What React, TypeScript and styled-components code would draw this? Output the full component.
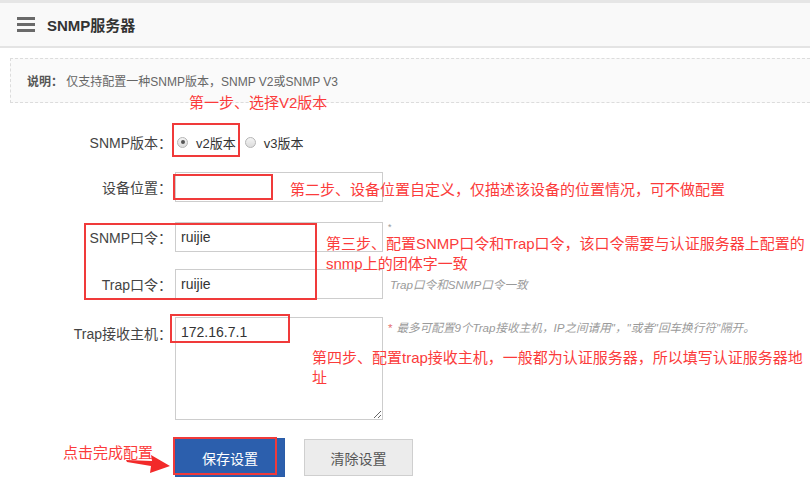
import React from 'react'
import styled, { createGlobalStyle } from 'styled-components'

const GlobalStyle = createGlobalStyle`
  html, body {
    margin: 0;
    padding: 0;
    background: #fff;
  }
  body {
    font-family: "Liberation Sans", "Noto Sans CJK SC", sans-serif;
    color: #333;
  }
`

const Page = styled.div`
  position: relative;
  width: 810px;
  height: 494px;
  overflow: hidden;
  background: #fff;
`

const TopStrip = styled.div`
  height: 3px;
  background: #e6e6e6;
`

const Header = styled.div`
  display: flex;
  align-items: center;
  height: 43px;
  padding-left: 17px;
  background: #f9f9f9;
  border-bottom: 2px solid #e4e4e4;
`

const Burger = styled.span`
  display: flex;
  flex-direction: column;
  justify-content: space-between;
  width: 18px;
  height: 15px;
  margin-right: 12px;

  i {
    display: block;
    height: 3px;
    background: #6a6a6a;
  }
`

const Title = styled.h1`
  margin: 0;
  font-size: 15px;
  font-weight: bold;
  color: #333;
`

const Note = styled.div`
  display: flex;
  align-items: center;
  height: 43px;
  margin: 10px 0 0 10px;
  padding-left: 16px;
  background: #fafafa;
  border: 1px dashed #dcdcdc;
  border-right: none;
  font-size: 12px;
  color: #666;

  b {
    color: #555;
  }
`

const Form = styled.div`
  display: flex;
  flex-direction: column;
  padding-top: 24px;
`

const Row = styled.div<{ $top?: number; $align?: string }>`
  display: flex;
  align-items: ${p => p.$align || 'center'};
  margin-top: ${p => p.$top || 0}px;
`

const Label = styled.label<{ $pad?: number }>`
  width: 172px;
  margin-right: 3px;
  padding-top: ${p => p.$pad || 0}px;
  text-align: right;
  font-size: 14px;
  color: #444;
  flex-shrink: 0;
`

const RadioGroup = styled.div`
  display: flex;
  align-items: center;
  height: 30px;
  padding-left: 2px;
`

const Radio = styled.span<{ $checked?: boolean }>`
  position: relative;
  width: 9px;
  height: 9px;
  border: 1px solid #b5b5b5;
  border-radius: 50%;
  background: linear-gradient(#f4f4f4, #dcdcdc);

  &::after {
    content: '';
    display: ${p => (p.$checked ? 'block' : 'none')};
    position: absolute;
    left: 2.5px;
    top: 2.5px;
    width: 4px;
    height: 4px;
    border-radius: 50%;
    background: #555;
  }
`

const RadioText = styled.span`
  margin: 0 9px 0 8px;
  font-size: 13px;
  color: #333;
`

const TextInput = styled.input<{ $h?: number }>`
  box-sizing: border-box;
  width: 208px;
  height: ${p => p.$h || 30}px;
  padding: 0 5px;
  border: 1px solid #cdcdcd;
  outline: none;
  font-family: inherit;
  font-size: 14px;
  color: #333;
  background: #fff;
`

const TextArea = styled.textarea`
  box-sizing: border-box;
  width: 208px;
  height: 103px;
  padding: 6px 5px;
  border: 1px solid #cdcdcd;
  outline: none;
  font-family: inherit;
  font-size: 14px;
  line-height: 16px;
  color: #333;
`

const Hint = styled.span<{ $top?: number }>`
  align-self: flex-start;
  margin: ${p => p.$top || 0}px 0 0 5px;
  font-size: 11.6px;
  font-style: italic;
  color: #9a9a9a;
  white-space: nowrap;

  em {
    font-style: normal;
    color: #e57373;
    margin-right: 4px;
  }
`

const Star = styled.span`
  align-self: flex-start;
  margin: 0 0 0 5px;
  font-size: 9px;
  line-height: 10px;
  color: #999;
`

const HintCentered = styled(Hint)`
  align-self: center;
  margin: 0 0 0 7px;
`

const Buttons = styled.div`
  display: flex;
  align-items: center;
  gap: 19px;
  margin-top: 18px;
  padding-left: 175px;
`

const Button = styled.button<{ $primary?: boolean }>`
  box-sizing: border-box;
  width: ${p => (p.$primary ? 110 : 109)}px;
  height: ${p => (p.$primary ? 39 : 37)}px;
  border: 1px solid ${p => (p.$primary ? '#2a5ca8' : '#cfcfcf')};
  background: ${p => (p.$primary ? '#2c5fad' : '#ececec')};
  color: ${p => (p.$primary ? '#fff' : '#555')};
  font-family: inherit;
  font-size: 14px;
  cursor: pointer;
`

/* annotation layer drawn over the form */
const RedBox = styled.div<{ $x: number; $y: number; $w: number; $h: number }>`
  position: absolute;
  left: ${p => p.$x}px;
  top: ${p => p.$y}px;
  width: ${p => p.$w}px;
  height: ${p => p.$h}px;
  box-sizing: border-box;
  border: 2px solid #f03a3a;
  pointer-events: none;
`

const RedText = styled.div<{ $x: number; $y: number }>`
  position: absolute;
  left: ${p => p.$x}px;
  top: ${p => p.$y}px;
  font-size: 15px;
  line-height: 20px;
  color: #fb3b3b;
  white-space: nowrap;
  pointer-events: none;
`

const Arrow = styled.svg`
  position: absolute;
  left: 126px;
  top: 452px;
`

export default function App() {
  return (
    <Page>
      <GlobalStyle />
      <TopStrip />
      <Header>
        <Burger>
          <i />
          <i />
          <i />
        </Burger>
        <Title>SNMP服务器</Title>
      </Header>
      <Note>
        <b>说明：</b>&nbsp;仅支持配置一种SNMP版本，SNMP V2或SNMP V3
      </Note>

      <Form>
        <Row>
          <Label>SNMP版本：</Label>
          <RadioGroup>
            <Radio $checked />
            <RadioText>v2版本</RadioText>
            <Radio />
            <RadioText>v3版本</RadioText>
          </RadioGroup>
        </Row>
        <Row $top={15}>
          <Label>设备位置：</Label>
          <TextInput />
        </Row>
        <Row $top={20}>
          <Label>SNMP口令：</Label>
          <TextInput defaultValue="ruijie" />
          <Star>*</Star>
        </Row>
        <Row $top={17}>
          <Label>Trap口令：</Label>
          <TextInput defaultValue="ruijie" />
          <HintCentered>Trap口令和SNMP口令一致</HintCentered>
        </Row>
        <Row $top={18} $align="flex-start">
          <Label $pad={6}>Trap接收主机：</Label>
          <TextArea defaultValue="172.16.7.1" />
          <Hint $top={2}>
            <em>*</em>最多可配置9个Trap接收主机，IP之间请用"，"或者"回车换行符"隔开。
          </Hint>
        </Row>
        <Buttons>
          <Button $primary>保存设置</Button>
          <Button>清除设置</Button>
        </Buttons>
      </Form>

      <RedText $x={189} $y={93}>第一步、选择V2版本</RedText>
      <RedBox $x={172} $y={123} $w={68} $h={34} />
      <RedBox $x={173} $y={174} $w={100} $h={26} />
      <RedText $x={290} $y={180}>第二步、设备位置自定义，仅描述该设备的位置情况，可不做配置</RedText>
      <RedBox $x={84} $y={223} $w={233} $h={77} />
      <RedText $x={326} $y={234}>
        第三步、配置SNMP口令和Trap口令，该口令需要与认证服务器上配置的
        <br />
        snmp上的团体字一致
      </RedText>
      <RedBox $x={170} $y={314} $w={120} $h={29} />
      <RedText $x={312} $y={348}>
        第四步、配置trap接收主机，一般都为认证服务器，所以填写认证服务器地
        <br />
        址
      </RedText>
      <RedBox $x={173} $y={437} $w={104} $h={38} />
      <RedText $x={63} $y={443}>点击完成配置</RedText>
      <Arrow width="46" height="22" viewBox="0 0 46 22">
        <polygon points="0,8 26,9 25,3 44,14 24,21 25,14 1,10" fill="#f22a2a" />
      </Arrow>
    </Page>
  )
}
